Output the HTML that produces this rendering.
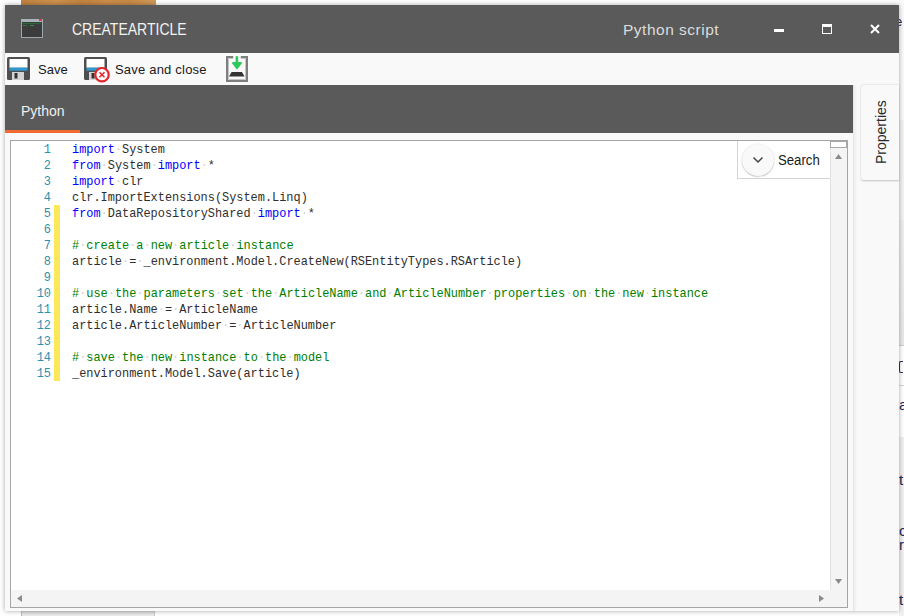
<!DOCTYPE html>
<html><head><meta charset="utf-8">
<style>
*{margin:0;padding:0;box-sizing:border-box}
html,body{width:904px;height:616px;overflow:hidden;background:#fff;font-family:"Liberation Sans",sans-serif}
.abs{position:absolute}
#win{position:absolute;left:5px;top:5px;width:894px;height:606px;background:#f9f9f9;box-shadow:0 0 5px rgba(0,0,0,0.35)}
#title{position:absolute;left:0;top:0;width:894px;height:48px;background:#5a5a5a}
#toolbar{position:absolute;left:0;top:48px;width:894px;height:32px;background:#f9f9f9}
#tabbar{position:absolute;left:0;top:80px;width:848px;height:48px;background:#5a5a5a}
#editor{position:absolute;left:5px;top:135px;width:838px;height:468px;border:1px solid #a5a5a5;background:#fff;overflow:hidden}
.code{position:absolute;left:61px;top:0;font-family:"Liberation Mono",monospace;font-size:11.91px;line-height:16px;color:#2e2e2e;white-space:pre}
.ln{position:absolute;left:0;width:40px;text-align:right;font-family:"Liberation Mono",monospace;font-size:11.91px;line-height:16px;color:#2b91af;white-space:pre}
.k{color:#0000ff}
.c{color:#008000}
.d{color:#d2d2d2}
</style></head><body>
<!-- background bits -->
<div class="abs" style="left:21px;top:0;width:135px;height:5px;background:linear-gradient(90deg,#c2833f,#cd9150 25%,#c3843f 45%,#cc8d4a 65%,#c88a47 80%,#d29a5a)"></div>
<div class="abs" style="left:21px;top:611px;width:134px;height:5px;background:linear-gradient(#d4d4d4,#e6e6e6 60%,#ececec);border-left:1px solid #bdbdbd;border-right:1px solid #c8c8c8"></div>
<div class="abs" style="left:899px;top:0;width:5px;height:616px;overflow:hidden;background:#fafafa">
  <div class="abs" style="left:0;top:120px;width:5px;height:100px;background:#f3f3f3"></div>
  <div class="abs" style="left:0;top:220px;width:5px;height:125px;background:linear-gradient(#eeeeee,#e8e8e8)"></div>
  <div class="abs" style="left:0;top:345px;width:5px;height:1px;background:#cfcfcf"></div>
  <div class="abs" style="left:0;top:346px;width:5px;height:91px;background:#fff"></div>
  <div class="abs" style="left:0;top:385px;width:5px;height:1px;background:#d6d6d6"></div>
  <div class="abs" style="left:0;top:437px;width:5px;height:179px;background:#f1f1f1"></div>
  <div class="abs" style="left:-4px;top:14px;font-size:13px;line-height:16px;color:#1b2b55">e</div>
  <div class="abs" style="left:0;top:361px;width:4px;height:12px;border:1.3px solid #24345f;border-right:none;border-radius:2px 0 0 2px"></div>
  <div class="abs" style="left:0px;top:397px;font-size:15px;line-height:16px;color:#1b2b55">a</div>
  <div class="abs" style="left:0;top:472px;font-size:15px;line-height:16px;color:#1b2b55">t</div>
  <div class="abs" style="left:0px;top:523px;font-size:15px;line-height:16px;color:#1b2b55">c</div>
  <div class="abs" style="left:0;top:537px;font-size:15px;line-height:16px;color:#1b2b55">r</div>
  <div class="abs" style="left:0;top:592px;font-size:15px;line-height:16px;color:#1b2b55">t</div>
</div>

<div id="win">
  <div id="title">
    <div class="abs" style="left:16px;top:14px;width:22px;height:19px;background:#3c3c3c;border:1px solid #9ca7af;border-top:3px solid #a8b3bb"></div>
    <div class="abs" style="left:34px;top:14px;width:3px;height:2px;background:#e0383a"></div>
    <div class="abs" style="left:17px;top:17.5px;width:19px;height:1.2px;background:#2b6a38"></div>
    <div class="abs" style="left:17.5px;top:19.8px;width:2px;height:1px;background:#2f8a44"></div>
    <div class="abs" style="left:21px;top:19.8px;width:1px;height:1px;background:#2f8a44"></div>
    <div class="abs" style="left:25px;top:19.8px;width:4px;height:1px;background:#2f8a44"></div>
    <div class="abs" style="left:67px;top:14.7px;font-size:16px;transform:scaleX(0.875);transform-origin:0 0;color:#f2f2f2;line-height:20px;white-space:nowrap">CREATEARTICLE</div>
    <div class="abs" style="left:618px;top:14.8px;font-size:15.5px;letter-spacing:0.5px;color:#dcdcdc;line-height:20px;white-space:nowrap">Python script</div>
    <div class="abs" style="left:769px;top:24.4px;width:10px;height:2.4px;background:#fff"></div>
    <div class="abs" style="left:817px;top:19px;width:10px;height:10px;border:1.5px solid #fff;border-top:3px solid #fff"></div>
    <svg class="abs" style="left:865px;top:19px" width="10" height="10" viewBox="0 0 10 10"><path d="M1 1L9 9M9 1L1 9" stroke="#fff" stroke-width="2"/></svg>
  </div>
  <div id="toolbar">
    <svg class="abs" style="left:2px;top:4px" width="23" height="23"><rect x="0" y="0" width="23" height="23" rx="1.5" fill="#4f4f4f"/><rect x="2.5" y="2" width="18" height="8.7" fill="#fff"/><rect x="2.5" y="10.7" width="18" height="3" fill="#2f9ad2"/><rect x="5" y="15" width="12" height="8" fill="#d4d4d4"/><rect x="7.5" y="16" width="3" height="5.5" fill="#333"/></svg>
    <div class="abs" style="left:33px;top:9px;font-size:13px;line-height:16px;color:#1a1a1a">Save</div>
    <svg class="abs" style="left:79px;top:4px" width="32" height="28"><rect x="0" y="0" width="23" height="23" rx="1.5" fill="#4f4f4f"/><rect x="2.5" y="2" width="18" height="8.7" fill="#fff"/><rect x="2.5" y="10.7" width="18" height="3" fill="#2f9ad2"/><rect x="5" y="15" width="12" height="8" fill="#d4d4d4"/><rect x="7.5" y="16" width="3" height="5.5" fill="#333"/><circle cx="18" cy="17.7" r="6.7" fill="#fff" stroke="#e5262c" stroke-width="2.2"/><path d="M15.5 15.2L20.5 20.2M20.5 15.2L15.5 20.2" stroke="#e5262c" stroke-width="1.6"/></svg>
    <div class="abs" style="left:110px;top:9px;font-size:13px;letter-spacing:0.2px;line-height:16px;color:#1a1a1a">Save and close</div>
    <svg class="abs" style="left:221px;top:3px" width="22" height="26" viewBox="0 0 22 26"><path d="M7.2 1H1V25H21V1H14.8" stroke="#7e7e7e" stroke-width="2" fill="none"/><path d="M7.2 2.5H2.5V23.5H19.5V2.5H14.8" stroke="#c4c4c4" stroke-width="1" fill="none"/><rect x="9.6" y="0" width="2.6" height="8" rx="1.2" fill="#2ec95a"/><path d="M7 7H15L11 12.2Z" fill="#2ec95a" stroke="#2ec95a" stroke-width="2" stroke-linejoin="round"/><path d="M5.6 16H16L18.5 20.6H3Z" fill="#333"/></svg>
  </div>
  <div class="abs" style="left:848px;top:80px;width:8px;height:526px;background:linear-gradient(90deg,#e2e2e2,#f3f3f3 2px,#f9f9f9 5px)"></div>
  <div class="abs" style="left:856px;top:80px;width:38px;height:95px;background:#f9f9f9;border-radius:3px 0 0 3px;box-shadow:0 0.5px 2px rgba(0,0,0,0.22)">
    <div class="abs" style="left:12.1px;top:78.5px;width:80px;transform-origin:0 0;transform:rotate(-90deg);font-size:14px;line-height:16px;color:#2a2a2a;white-space:nowrap">Properties</div>
  </div>
  <div id="tabbar">
    <div class="abs" style="left:16px;top:16.5px;font-size:14px;color:#f0f0f0;line-height:18px">Python</div>
    <div class="abs" style="left:0;top:45px;width:75px;height:3px;background:#f26a30"></div>
  </div>
  <div id="editor">
    <div class="abs" style="left:43px;top:64px;width:6px;height:176px;background:#fde75b"></div>
<div class="ln" style="top:1px">1
2
3
4
5
6
7
8
9
10
11
12
13
14
15</div>
<div class="code" style="top:1px"><span class="k">import</span><span class="d">·</span>System
<span class="k">from</span><span class="d">·</span>System<span class="d">·</span><span class="k">import</span><span class="d">·</span>*
<span class="k">import</span><span class="d">·</span>clr
clr.ImportExtensions(System.Linq)
<span class="k">from</span><span class="d">·</span>DataRepositoryShared<span class="d">·</span><span class="k">import</span><span class="d">·</span>*

<span class="c">#</span><span class="d">·</span><span class="c">create</span><span class="d">·</span><span class="c">a</span><span class="d">·</span><span class="c">new</span><span class="d">·</span><span class="c">article</span><span class="d">·</span><span class="c">instance</span>
article<span class="d">·</span>=<span class="d">·</span>_environment.Model.CreateNew(RSEntityTypes.RSArticle)

<span class="c">#</span><span class="d">·</span><span class="c">use</span><span class="d">·</span><span class="c">the</span><span class="d">·</span><span class="c">parameters</span><span class="d">·</span><span class="c">set</span><span class="d">·</span><span class="c">the</span><span class="d">·</span><span class="c">ArticleName</span><span class="d">·</span><span class="c">and</span><span class="d">·</span><span class="c">ArticleNumber</span><span class="d">·</span><span class="c">properties</span><span class="d">·</span><span class="c">on</span><span class="d">·</span><span class="c">the</span><span class="d">·</span><span class="c">new</span><span class="d">·</span><span class="c">instance</span>
article.Name<span class="d">·</span>=<span class="d">·</span>ArticleName
article.ArticleNumber<span class="d">·</span>=<span class="d">·</span>ArticleNumber

<span class="c">#</span><span class="d">·</span><span class="c">save</span><span class="d">·</span><span class="c">the</span><span class="d">·</span><span class="c">new</span><span class="d">·</span><span class="c">instance</span><span class="d">·</span><span class="c">to</span><span class="d">·</span><span class="c">the</span><span class="d">·</span><span class="c">model</span>
_environment.Model.Save(article)</div>
    <div class="abs" style="left:726px;top:0;width:93px;height:38px;background:#fff;border-left:1px solid #d4d4d4;border-bottom:1px solid #d4d4d4"></div>
    <div class="abs" style="left:731px;top:3px;width:32px;height:32px;border-radius:50%;background:#f9f9f9;box-shadow:0 0.6px 1.6px rgba(0,0,0,0.3)"></div>
    <svg class="abs" style="left:741px;top:15px" width="12" height="8" viewBox="0 0 12 8"><path d="M1.5 1.5L6 6L10.5 1.5" stroke="#444" stroke-width="1.5" fill="none"/></svg>
    <div class="abs" style="left:767.3px;top:10.75px;font-size:14px;transform:scaleX(0.94);transform-origin:0 0;line-height:16px;color:#1a1a1a">Search</div>
    <div class="abs" style="left:819px;top:0;width:17px;height:466px;background:#f4f4f4;border-left:1px solid #e2e2e2"></div>
    <div class="abs" style="left:819px;top:0;width:17px;height:7px;background:#fff;border:1px solid #a8a8a8"></div>
    <svg class="abs" style="left:824px;top:13px" width="7" height="5"><path d="M0 5L3.5 0L7 5Z" fill="#8a8a8a"/></svg>
    <svg class="abs" style="left:824px;top:438px" width="7" height="5"><path d="M0 0L7 0L3.5 5Z" fill="#8a8a8a"/></svg>
    <div class="abs" style="left:0;top:449px;width:836px;height:17px;background:#f4f4f4"></div>
    <svg class="abs" style="left:6px;top:454px" width="5" height="7"><path d="M5 0L5 7L0 3.5Z" fill="#8a8a8a"/></svg>
    <svg class="abs" style="left:808px;top:454px" width="5" height="7"><path d="M0 0L0 7L5 3.5Z" fill="#8a8a8a"/></svg>
  </div>
</div>
</body></html>
